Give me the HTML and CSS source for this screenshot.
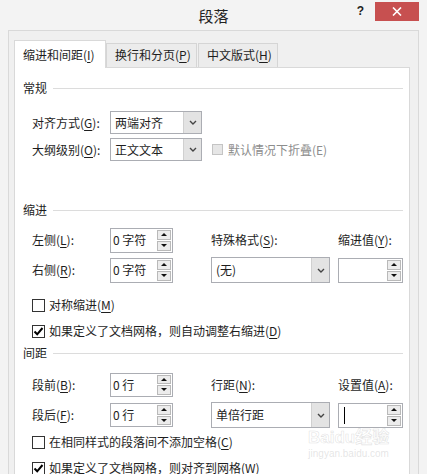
FILE: index.html
```html
<!DOCTYPE html>
<html>
<head>
    <meta charset="UTF-8">
    <meta name="viewport" content="width=device-width, initial-scale=1.0">
    <title>段落</title>
    <link rel="stylesheet" href="styles.css">
</head>
<body>
    <div class="dialog">
        <div class="titlebar">
            <span></span>
            <div class="title">段落</div>
            <div class="controls">
                <span class="help">?</span>
                <div class="close">
                    <svg width="10" height="9" viewBox="0 0 10 9"><path d="M1 0.5 L9 8.5 M9 0.5 L1 8.5" stroke="#fff" stroke-width="1.6" fill="none"/></svg>
                </div>
            </div>
        </div>

        <div class="client">
            <div class="tabs">
                <div class="tab active">缩进和间距(<u>I</u>)</div>
                <div class="tab">换行和分页(<u>P</u>)</div>
                <div class="tab third">中文版式(<u>H</u>)</div>
            </div>

            <div class="panel">
                <!-- 常规 -->
                <div class="group-title">常规</div>
                <div class="form-grid general">
                    <label>对齐方式(<u>G</u>):</label>
                    <div class="combo small"><span class="value">两端对齐</span><span class="drop"><svg width="8" height="5" viewBox="0 0 8 5"><path d="M1 1 L4 4 L7 1" stroke="#444" stroke-width="1.4" fill="none"/></svg></span></div>
                    <span></span>
                    <label>大纲级别(<u>O</u>):</label>
                    <div class="combo small"><span class="value">正文文本</span><span class="drop"><svg width="8" height="5" viewBox="0 0 8 5"><path d="M1 1 L4 4 L7 1" stroke="#444" stroke-width="1.4" fill="none"/></svg></span></div>
                    <div class="check-inline disabled"><span class="box"></span><span>默认情况下折叠(E)</span></div>
                </div>

                <!-- 缩进 -->
                <div class="group-title indent-title">缩进</div>
                <div class="form-grid indent-grid">
                    <label>左侧(<u>L</u>):</label>
                    <div class="spin"><span class="value">0 字符</span><span class="spin-btns"><span><i class="up"></i></span><span><i class="down"></i></span></span></div>
                    <label>特殊格式(<u>S</u>):</label>
                    <label>缩进值(<u>Y</u>):</label>
                    <label>右侧(<u>R</u>):</label>
                    <div class="spin"><span class="value">0 字符</span><span class="spin-btns"><span><i class="up"></i></span><span><i class="down"></i></span></span></div>
                    <div class="combo wide"><span class="value">(无)</span><span class="drop"><svg width="8" height="5" viewBox="0 0 8 5"><path d="M1 1 L4 4 L7 1" stroke="#444" stroke-width="1.4" fill="none"/></svg></span></div>
                    <div class="spin narrow"><span class="value"></span><span class="spin-btns"><span><i class="up"></i></span><span><i class="down"></i></span></span></div>
                </div>
                <div class="checks indent-checks">
                    <div class="check-row"><span class="box"></span><span>对称缩进(<u>M</u>)</span></div>
                    <div class="check-row"><span class="box"><svg width="11" height="11" viewBox="0 0 11 11"><path d="M1.5 5.5 L4.2 8.3 L9.5 2" stroke="#000" stroke-width="2" fill="none"/></svg></span><span>如果定义了文档网格，则自动调整右缩进(<u>D</u>)</span></div>
                </div>

                <!-- 间距 -->
                <div class="group-title spacing-title">间距</div>
                <div class="form-grid spacing-grid">
                    <label>段前(<u>B</u>):</label>
                    <div class="spin short"><span class="value">0 行</span><span class="spin-btns"><span><i class="up"></i></span><span><i class="down"></i></span></span></div>
                    <label>行距(<u>N</u>):</label>
                    <label>设置值(<u>A</u>):</label>
                    <label>段后(<u>F</u>):</label>
                    <div class="spin short"><span class="value">0 行</span><span class="spin-btns"><span><i class="up"></i></span><span><i class="down"></i></span></span></div>
                    <div class="combo wide"><span class="value">单倍行距</span><span class="drop"><svg width="8" height="5" viewBox="0 0 8 5"><path d="M1 1 L4 4 L7 1" stroke="#444" stroke-width="1.4" fill="none"/></svg></span></div>
                    <div class="spin narrow mid"><span class="value"><span class="caret"></span></span><span class="spin-btns"><span><i class="up"></i></span><span><i class="down"></i></span></span></div>
                </div>
                <div class="checks spacing-checks">
                    <div class="check-row"><span class="box"></span><span>在相同样式的段落间不添加空格(<u>C</u>)</span></div>
                    <div class="check-row"><span class="box"><svg width="11" height="11" viewBox="0 0 11 11"><path d="M1.5 5.5 L4.2 8.3 L9.5 2" stroke="#000" stroke-width="2" fill="none"/></svg></span><span>如果定义了文档网格，则对齐到网格(<u>W</u>)</span></div>
                </div>
            </div>
        </div>

        <div class="watermark">
            <span class="wm-main">Baidu经验</span>
            <span class="wm-url">jingyan.baidu.com</span>
        </div>
    </div>
</body>
</html>
```

FILE: styles.css
```css
body {
    margin: 0;
    font-family: "Noto Sans CJK SC", sans-serif;
    font-size: 12px;
    line-height: 16px;
    color: #1e1e1e;
    background-color: #f3f3f3;
}

u {
    text-decoration-thickness: 1px;
    text-underline-offset: 2px;
}

.dialog {
    position: relative;
    width: 427px;
    height: 474px;
    overflow: hidden;
}

/* title bar */
.titlebar {
    display: grid;
    grid-template-columns: 1fr auto 1fr;
    height: 30px;
}

.title {
    font-size: 15px;
    line-height: 30px;
    padding-top: 1px;
    color: #222;
}

.controls {
    justify-self: end;
    display: flex;
    align-items: flex-start;
    padding-right: 8px;
}

.help {
    font-family: "Liberation Sans", sans-serif;
    font-weight: bold;
    font-size: 12px;
    line-height: 12px;
    margin-top: 5px;
    margin-right: 11px;
    color: #222;
}

.close {
    display: flex;
    align-items: center;
    justify-content: center;
    width: 44px;
    height: 19px;
    margin-top: 2px;
    background-color: #c75050;
}

/* client area */
.client {
    height: 443px;
    margin: 0 8px;
    padding: 9px 8px 0 5px;
    border: 1px solid #d9d9d9;
    border-bottom: none;
    background-color: #f0f0f0;
}

.tabs {
    display: flex;
    align-items: flex-end;
    height: 27px;
}

.tab {
    box-sizing: border-box;
    width: 91px;
    height: 24px;
    padding: 3px 0 0 8px;
    border: 1px solid #d5d5d5;
    border-bottom: none;
    background-color: #ececec;
    white-space: nowrap;
}

.tab.active {
    position: relative;
    z-index: 1;
    width: 92px;
    height: 28px;
    margin-bottom: -1px;
    padding-top: 6px;
    background-color: #fff;
    border-color: #d9d9d9;
}

.tab.third {
    width: 80px;
    margin-left: 1px;
}

.panel {
    height: 420px;
    padding: 12px 6px 0 8px;
    border: 1px solid #d9d9d9;
    background-color: #fff;
}

.group-title {
    display: flex;
    align-items: center;
    height: 16px;
}

.group-title::after {
    content: "";
    flex: 1;
    margin-left: 6px;
    border-top: 1px solid #dcdcdc;
}

.indent-title {
    margin-top: 41px;
}

.spacing-title {
    margin-top: 1px;
}

.form-grid {
    display: grid;
    align-items: center;
    margin-left: 9px;
    row-gap: 4px;
}

.general {
    grid-template-columns: 78px 92px auto;
    grid-template-rows: 23px 23px;
    margin-top: 15px;
}

.indent-grid {
    grid-template-columns: 78px 101px 127px 65px;
    grid-template-rows: 26px 26px;
    margin-top: 9px;
}

.spacing-grid {
    grid-template-columns: 78px 101px 127px 65px;
    grid-template-rows: 25px 26px;
    row-gap: 5px;
    margin-top: 11px;
}

/* combo box */
.combo {
    display: flex;
    box-sizing: border-box;
    border: 1px solid #abadb3;
    background-color: #fff;
}

.combo.small {
    width: 92px;
    height: 23px;
}

.combo.wide {
    width: 119px;
    height: 26px;
}

.combo .value {
    flex: 1;
    align-self: center;
    padding-left: 4px;
}

.combo .drop {
    display: flex;
    align-items: center;
    justify-content: center;
    width: 17px;
    background-color: #e3e3e3;
    border-left: 1px solid #d0d0d0;
}

/* spin box */
.spin {
    display: flex;
    box-sizing: border-box;
    width: 63px;
    height: 25px;
    border: 1px solid #abadb3;
    background-color: #fff;
}

.spin.short {
    height: 24px;
}

.spin.narrow {
    width: 65px;
}

.spin .value {
    flex: 1;
    display: flex;
    align-items: center;
    padding-left: 2px;
}

.spin-btns {
    display: flex;
    flex-direction: column;
    gap: 1px;
    width: 14px;
    margin: 1px;
}

.spin-btns span {
    flex: 1;
    display: flex;
    align-items: center;
    justify-content: center;
    border: 1px solid #b9b9b9;
    background-color: #ececec;
}

.spin-btns i {
    width: 0;
    height: 0;
    border-left: 3px solid transparent;
    border-right: 3px solid transparent;
}

.spin-btns .up {
    border-bottom: 3px solid #111;
}

.spin-btns .down {
    border-top: 3px solid #111;
}

.caret {
    width: 1px;
    height: 17px;
    margin-left: 3px;
    background-color: #000;
}

/* check boxes */
.checks {
    margin-left: 9px;
}

.indent-checks {
    margin-top: 9px;
}

.spacing-checks {
    margin-top: 1px;
}

.check-row {
    display: flex;
    align-items: center;
    gap: 4px;
    height: 26px;
}

.box {
    display: flex;
    align-items: center;
    justify-content: center;
    box-sizing: border-box;
    width: 13px;
    height: 13px;
    border: 1px solid #333;
    background-color: #fff;
}

.check-inline {
    display: flex;
    align-items: center;
    gap: 5px;
    margin-left: 10px;
}

.check-inline.disabled {
    color: #8d8d8d;
}

.check-inline.disabled .box {
    width: 11px;
    height: 11px;
    border-color: #c4c4c4;
    background-color: #e6e6e6;
}

/* baidu watermark */
.watermark {
    position: absolute;
    left: 308px;
    top: 428px;
    display: flex;
    flex-direction: column;
    align-items: center;
    color: rgba(255, 255, 255, 0.6);
    -webkit-text-stroke: 0.6px rgba(170, 170, 170, 0.35);
}

.wm-main {
    font-family: "Liberation Sans", "Noto Sans CJK SC", sans-serif;
    font-weight: bold;
    font-size: 17px;
    line-height: 20px;
}

.wm-url {
    font-family: "Liberation Sans", sans-serif;
    font-size: 10px;
    line-height: 12px;
    -webkit-text-stroke: 0;
    color: rgba(180, 180, 180, 0.35);
}
```
